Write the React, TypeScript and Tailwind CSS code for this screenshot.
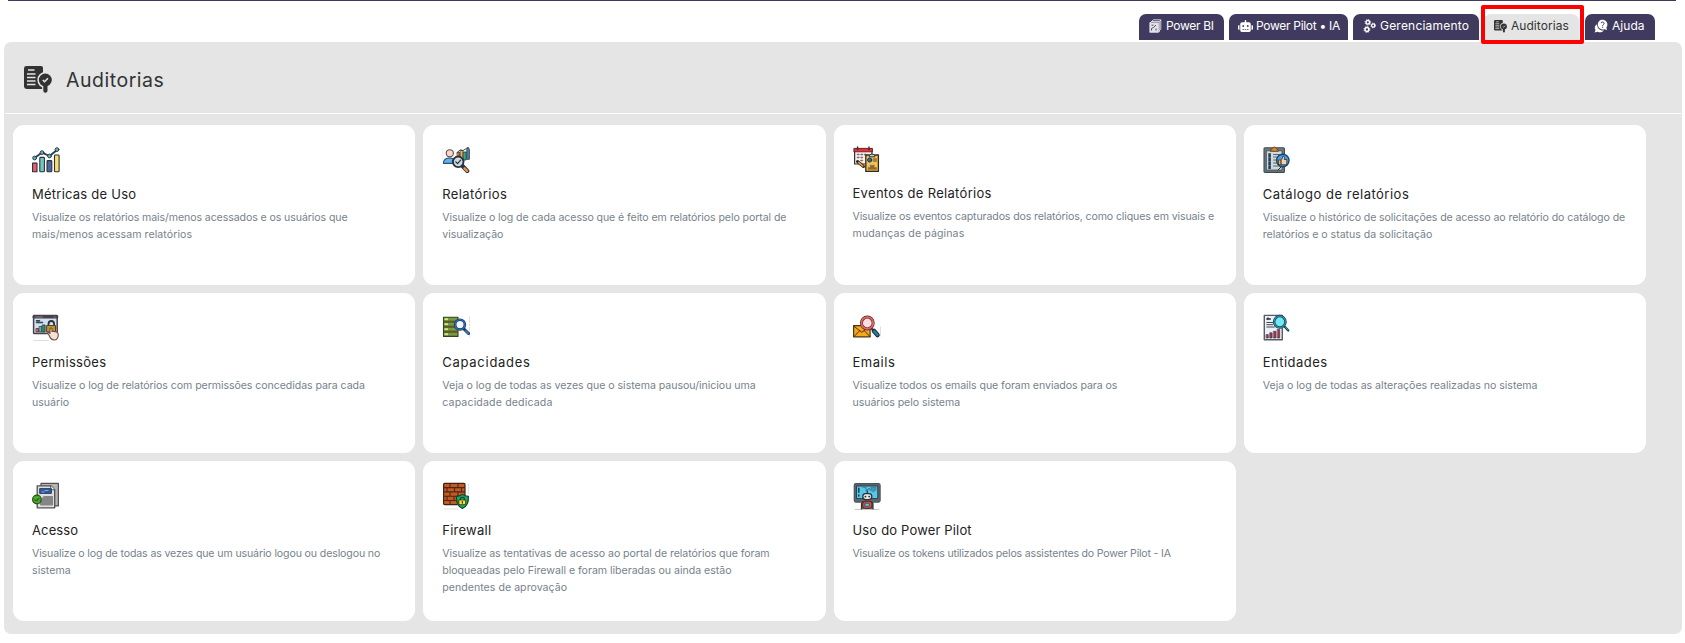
import React from "react";
import { FaRobot } from "react-icons/fa";

type Line = [text: string, tracking: string];
type CardData = {
  icon: React.ReactNode;
  title: string;
  titleTracking: string;
  lines: Line[];
  raised?: boolean;
};

const INK = "#2d3138";

function Svg({ children }: { children: React.ReactNode }) {
  return (
    <svg viewBox="0 0 28 28" className="block h-7 w-7" fill="none" stroke={INK} strokeLinejoin="round" strokeLinecap="round">
      {children}
    </svg>
  );
}

const MetricsIcon = (
  <Svg>
    <rect x="0.6" y="17.1" width="4.4" height="8.7" fill="#e8606f" strokeWidth="1.1" />
    <rect x="7.8" y="11.4" width="4.6" height="14.4" rx="0.8" fill="#6fc8c1" strokeWidth="1.1" />
    <rect x="15" y="14.6" width="4.8" height="11.2" rx="0.8" fill="#4c669f" strokeWidth="1.1" />
    <rect x="22.5" y="9" width="4.6" height="16.8" rx="0.8" fill="#fbdd6e" strokeWidth="1.1" />
    <path d="M2.5 12 10 6.6 17.5 10 25 4" stroke="#36395a" strokeWidth="1.9" />
    <g fill="#55bdb8" strokeWidth="0.9">
      <circle cx="2.6" cy="12" r="1.9" />
      <circle cx="10" cy="6.6" r="1.9" />
      <circle cx="17.5" cy="10" r="1.9" />
      <circle cx="25" cy="3.6" r="1.9" />
    </g>
  </Svg>
);

const ReportsIcon = (
  <Svg>
    <path d="M0.8 2.5V13" stroke="#d9d9d9" strokeWidth="0.6" />
    <rect x="15.5" y="6.5" width="2.4" height="7" fill="#e05a4e" strokeWidth="0.7" />
    <rect x="18.6" y="4.5" width="2.4" height="9" fill="#f0b93a" strokeWidth="0.7" />
    <rect x="21.6" y="6" width="2.6" height="8" fill="#27ae83" strokeWidth="0.8" />
    <path d="M24.8 13V3.4l1.6-2 1 2V13Z" fill="#4b86ba" strokeWidth="0.8" />
    <path d="M15 6.5 18.5 3.8 21 4.6 25.6 1.6" strokeWidth="0.9" />
    <circle cx="7.8" cy="7.3" r="3.6" fill="#f7d6cc" stroke="#6b4b46" strokeWidth="1.1" />
    <path d="M1.4 17.4C1.4 13.6 4 12 7.5 12c3 0 5 1 5.8 3v2.4Z" fill="#63b0ee" stroke="#2c5378" strokeWidth="1.1" />
    <path d="m20.5 20 4.8 5" stroke={INK} strokeWidth="4" />
    <path d="m22.5 22.3 2.6 2.6" stroke="#d79a55" strokeWidth="2.4" />
    <circle cx="16.2" cy="15.8" r="5.3" fill="#c9dce8" strokeWidth="1.9" />
    <path d="m13.8 15.8 1.8 1.9 3-3.6" strokeWidth="1.2" />
  </Svg>
);

const EventsIcon = (
  <Svg>
    <rect x="1.6" y="3" width="17.4" height="15" fill="#f6f1ee" strokeWidth="1.2" />
    <rect x="1.2" y="2.4" width="18.2" height="3.4" fill="#e33238" stroke="#5b1418" strokeWidth="0.8" />
    <path d="M4.6 1v2.6M16 1v2.6" strokeWidth="1.4" />
    <path d="M4.5 8.5h1.4M8 8.5h1.4M4.5 11.5h1.4M8 11.5h1.4M8 14.5h1.4M11.5 8.5h1" stroke="#7a6a68" strokeWidth="1.5" />
    <rect x="12.8" y="9" width="12.6" height="16.4" fill="#f2c35b" stroke="#33271a" strokeWidth="1.3" />
    <path d="M16.2 10.4c0-3.2 5.6-3.2 5.6 0Z" fill="#b8d6ee" strokeWidth="1" />
    <circle cx="16.7" cy="14" r="2.1" fill="#2d6ea3" strokeWidth="1" />
    <path d="M20.5 13h3M20.5 15h3" stroke="#8d6a34" strokeWidth="1.3" />
    <path d="M15.2 23.6v-2h2v-2.4h4v2.4h2.2v2Z" fill="#8d6a34" stroke="#8d6a34" strokeWidth="0.6" />
    <path d="m4.5 15.5 6 5" stroke="#3b2419" strokeWidth="3" />
    <path d="m5.8 16.6 4 3.4" stroke="#eda73d" strokeWidth="1.5" />
  </Svg>
);

const CatalogIcon = (
  <Svg>
    <rect x="1" y="1.8" width="20.4" height="24.6" rx="1" fill="#6d7b80" stroke="#404b50" strokeWidth="1.1" />
    <rect x="3.6" y="4.8" width="15.4" height="19.2" fill="#d3d9db" stroke="#404b50" strokeWidth="0.8" />
    <path d="M7.5 4.9c.2-1.9 1.4-2 2-2.5.8-1.8 3-1.8 3.8 0 .6.5 1.8.6 2 2.5Z" fill="#d7862f" stroke="#5e3a16" strokeWidth="0.9" />
    <path d="M6.6 8.6v1.2M6.6 12.6v1.2M6.6 16.6v1.2M6.6 20.6v1.2" stroke="#1f3f66" strokeWidth="2.6" strokeLinecap="square" />
    <path d="M10.5 8.500h6M10.5 11h4M10.5 14h3M10.5 17h3.5M10.5 20h6" stroke="#586468" strokeWidth="1" />
    <path d="m15 24 4-4" strokeWidth="1" />
    <circle cx="19.8" cy="14.5" r="6.2" fill="#4b9de4" stroke="#174877" strokeWidth="1.4" />
    <path d="M18 18.5v-4.3c1.4-1 1.4-2.6 1.8-4 1.7-.2 1.9 1.5 1.5 3.3h2.500v5Z" fill="#f7cfae" stroke="#33271a" strokeWidth="0.8" />
    <rect x="15.8" y="14" width="2" height="4.6" fill="#ebbc3e" stroke="#33271a" strokeWidth="0.7" />
  </Svg>
);

const PermissionsIcon = (
  <Svg>
    <path d="M1.5 26.5h15" stroke="#d6d6d6" strokeWidth="0.8" />
    <rect x="1.6" y="1.6" width="23.6" height="18" rx="0.5" fill="#cfe1f3" stroke="#4a4148" strokeWidth="1.5" />
    <path d="M1.8 3H25" stroke="#4a4148" strokeWidth="2.8" />
    <path d="M3.5 3h7M22 3h1" stroke="#9b8d94" strokeWidth="0.8" />
    <path d="M4.5 8.5h6M4.5 6.8h3" stroke="#39404d" strokeWidth="1.5" />
    <rect x="4.3" y="14.5" width="2.3" height="3.5" fill="#e0574f" strokeWidth="0.7" />
    <rect x="7.5" y="12.5" width="2.3" height="5.5" fill="#68b38b" strokeWidth="0.7" />
    <rect x="10.5" y="11" width="2.6" height="7" fill="#2a8b85" strokeWidth="0.8" />
    <path d="M16.5 11.5V10c0-4 5.6-4 5.6 0v1.5" strokeWidth="1.8" />
    <rect x="15" y="11.5" width="8.5" height="6.5" fill="#c2922c" stroke="#57401a" strokeWidth="1" />
    <path d="M17.2 21.5 15.6 19c.5-1 1.7-.5 2.4.5v-4.7c.3-1 1.7-1 2 0v2.7c2-.5 6 .5 6.2 2.200.3 3-.7 6.300-3.700 6.300-2.500 0-4.300-1.500-5.300-4.500Z" fill="#fae0d2" stroke="#66504a" strokeWidth="1.1" />
  </Svg>
);

const CapacityIcon = (
  <Svg>
    {[2.5, 7.5, 12.5, 17.5].map((y) => (
      <g key={y}>
        <rect x="1.5" y={y + 0.7} width="14.5" height="4.2" fill="#759b43" stroke="#33431d" strokeWidth="1.1" />
        <path d={`M2.5 ${y + 2.7}h3.5`} stroke="#c9ed7f" strokeWidth="1.9" strokeLinecap="butt" />
      </g>
    ))}
    <path d="M2.5 7.9h13M2.5 12.9h13M2.5 17.9h13" stroke="#a66b38" strokeWidth="0.8" />
    <path d="M27.5 3v20" stroke="#bdbdbd" strokeWidth="0.5" strokeDasharray="2 1.5" />
    <path d="m21.5 14.5 5 5" stroke="#1b3557" strokeWidth="3" />
    <path d="m23.500 16.600 2.700 2.700" stroke="#3777c2" strokeWidth="1.7" />
    <circle cx="18" cy="10.600" r="4.900" fill="#eef6fc" stroke="#1b3557" strokeWidth="2.6" />
    <circle cx="18" cy="10.600" r="4.900" stroke="#2f71ba" strokeWidth="1.2" />
  </Svg>
);

const EmailsIcon = (
  <Svg>
    <rect x="0.6" y="11.6" width="16.5" height="11.2" fill="#f6a81c" stroke="#4d3510" strokeWidth="1.2" />
    <path d="m1 12.300 7.800 6 8-6M1 22.600l5.800-6M17 22.600l-5.800-6" stroke="#4d3510" strokeWidth="1" />
    <path d="M27.500 13v9" stroke="#bfbfbf" strokeWidth="0.5" />
    <path d="m18.500 14.500 1.800 2" strokeWidth="1.9" />
    <path d="m21 17 3.500 4" stroke="#1c3540" strokeWidth="4.6" />
    <path d="m21.400 17.500 2.900 3.200" stroke="#2f7898" strokeWidth="2.6" />
    <circle cx="14.300" cy="9" r="5.900" fill="#f8dfe1" stroke="#5d2527" strokeWidth="3" />
    <circle cx="14.300" cy="9" r="5.900" stroke="#de6366" strokeWidth="1.9" />
  </Svg>
);

const EntitiesIcon = (
  <Svg>
    <rect x="1.3" y="1.4" width="18" height="24.3" fill="#edf0f6" stroke="#5a5c64" strokeWidth="1.4" />
    <path d="M3.8 5h3.600M5 3.8v1.800" strokeWidth="1.3" />
    <path d="M3.8 8.500h6M3.8 10.700h6M3.8 13h7.500" stroke="#44464e" strokeWidth="1" />
    <g fill="#a82f4e" strokeWidth="0.6">
      <rect x="3.4" y="20.6" width="1.9" height="3.4" />
      <rect x="7" y="18.8" width="2.1" height="5.2" />
      <rect x="10.7" y="17.3" width="2.2" height="6.7" />
      <rect x="14.5" y="15.5" width="2.2" height="8.5" />
    </g>
    <path d="m20.500 11.500 4.800 5" stroke="#173d4a" strokeWidth="2.3" />
    <path d="m22.300 13.300 2.700 2.800" stroke="#35a6bd" strokeWidth="0.9" />
    <circle cx="16.8" cy="7.8" r="5.7" fill="#76e8f5" stroke="#173d4a" strokeWidth="2.5" />
    <circle cx="16.8" cy="7.8" r="5.7" stroke="#2b93aa" strokeWidth="1.2" />
  </Svg>
);

const AccessIcon = (
  <Svg>
    <path d="M9 1.400h17.400v22.400H9Z" fill="#b4b4b4" stroke="#515151" strokeWidth="1.2" />
    <path d="M5.200 3.800h13.500l4 4v18H5.200Z" fill="#dedede" stroke="#515151" strokeWidth="1.3" />
    <path d="M18.700 3.800v4h4" fill="#fff" stroke="#515151" strokeWidth="1" />
    <rect x="8" y="6.6" width="11.4" height="4.8" fill="#315b9c" stroke="#1e355b" strokeWidth="0.9" />
    <path d="M10 10h2M13 8.500h3" stroke="#89aad8" strokeWidth="1" />
    <path d="M12 14.500h8.500V23h-12v-4Z" fill="#858585" stroke="#858585" strokeWidth="1" />
    <circle cx="4.9" cy="17.5" r="4.3" fill="#4da62d" stroke="#235516" strokeWidth="1.2" />
    <path d="m3 17.600 1.500 1.500 2.400-2.700" stroke="#173c0f" strokeWidth="1" />
  </Svg>
);

const FirewallIcon = (
  <Svg>
    <path d="M2 27h14M26.500 2v10" stroke="#cfcfcf" strokeWidth="0.6" />
    <rect x="1.6" y="1.4" width="21.4" height="21.2" rx="1" fill="#c25a24" stroke="#3f2215" strokeWidth="1.2" />
    <path d="M2 5.600h20.500M2 9.900h20.500M2 14.200h20.500M2 18.500h20.500M8 1.600v4M16 1.600v4M5 5.600v4.300M12.500 5.600v4.300M19.500 5.600v4.300M8 9.900v4.300M16 9.900v4.300M5 14.200v4.300M12 14.200v4.300M8 18.500v4" stroke="#4d2716" strokeWidth="1.1" />
    <path d="M20.400 12.400c1.900 1.600 3.800 1.900 6 2 .3 5.300-.5 9.600-6 12.100-5.500-2.500-6.300-6.800-6-12.100 2.200-.1 4.100-.4 6-2Z" fill="#19a76a" stroke="#0e4930" strokeWidth="1.2" />
    <path d="M18.400 18.200V17c0-2.300 4-2.300 4 0v1.200" stroke="#123523" strokeWidth="1.1" />
    <rect x="17.2" y="18" width="6.4" height="4.6" fill="#f7df28" stroke="#3f3a10" strokeWidth="0.8" />
    <path d="M20.400 19.600v1.500" strokeWidth="1.2" />
  </Svg>
);

const PilotIcon = (
  <Svg>
    <path d="M2 27.400h24" stroke="#a9a9a9" strokeWidth="0.7" />
    <rect x="1.3" y="1.7" width="25.8" height="18.4" rx="1.5" fill="#5d686e" stroke="#4a555a" strokeWidth="1.2" />
    <rect x="3.8" y="4" width="21" height="12.6" fill="#56c9ea" stroke="#24363f" strokeWidth="0.9" />
    <path d="M5.800 6.200v4M5.800 13v1" stroke="#223a45" strokeWidth="1.5" />
    <path d="M9 5h4v4l3-3 2 2V5h5v3l-3 2" fill="#4696ae" stroke="#387c92" strokeWidth="0.7" />
    <path d="M8.500 27v-5.500l2-2H18l2 2V27" fill="#58636a" strokeWidth="1.2" />
    <path d="M14.300 9v2.500" strokeWidth="1.3" />
    <rect x="9.8" y="11.6" width="9" height="6" rx="2.8" fill="#ece7e8" strokeWidth="1.3" />
    <path d="M12.400 14.600h.1M16.200 14.600h.1" strokeWidth="1.9" />
    <rect x="9.7" y="19.3" width="9.2" height="7" rx="2.5" fill="#d65243" stroke="#61251f" strokeWidth="1" />
    <rect x="12.3" y="21.3" width="4" height="3" fill="#58c7e8" stroke="#2a5364" strokeWidth="0.8" />
  </Svg>
);

function AuditIcon({ className, gap }: { className: string; gap: string }) {
  return (
    <svg viewBox="0 0 28 28" className={className}>
      <path d="M2.500 0H17a2 2 0 0 1 2 2v22.600H2.500A2.500 2.500 0 0 1 0 22.100V2.500A2.500 2.500 0 0 1 2.500 0Z" fill="#333" transform="scale(1 .93)" />
      <path d="M4 4h6.500M3 8h8.500M3 11.500h8.500M3 15h8.500M3 18.500h8.500" stroke={gap} strokeWidth="1.5" />
      <circle cx="21.3" cy="14" r="8" fill={gap} />
      <path d="M21.400 18v6.500" stroke={gap} strokeWidth="6.5" />
      <circle cx="21.3" cy="14" r="6.5" fill="#333" />
      <path d="M21.400 19v5.700" stroke="#333" strokeWidth="4.2" strokeLinecap="round" />
      <path d="m18.800 14 1.700 1.700 3.500-3.500" stroke={gap} strokeWidth="1.6" fill="none" />
    </svg>
  );
}

const PowerBIIcon = (
  <svg viewBox="0 0 13 14" className="h-3.5 w-[13px]" fill="none" stroke="#fff">
    <path d="M4.500.8h7.300v9.400l-1.500 1.600M3 2.500h7.300v10.600" strokeWidth="0.9" opacity="0.85" />
    <path d="M1 3.800 4.500.8M10.300 2.500l1.500-1.600" strokeWidth="0.8" />
    <rect x="0.8" y="3.8" width="8.7" height="9.600" fill="#fff" strokeWidth="0.6" opacity="0.85" />
    <path d="M2.500 11.500V9.500l2-1 2.500-2.500M7 11.500V9.500M2.500 6.200h2" stroke="#403b5e" strokeWidth="0.9" />
  </svg>
);

const GearsIcon = (
  <svg viewBox="0 0 13 14" className="h-3.5 w-[13px]" fill="none" stroke="#fff">
    <circle cx="4.8" cy="3.3" r="1.8" strokeWidth="1.4" />
    <circle cx="4.8" cy="3.3" r="2.8" strokeWidth="0.8" strokeDasharray="1.2 1" />
    <circle cx="10.2" cy="6.5" r="1.6" strokeWidth="1.3" />
    <circle cx="10.2" cy="6.5" r="2.4" strokeWidth="0.8" strokeDasharray="1 0.8" />
    <circle cx="3.9" cy="10.5" r="1.9" strokeWidth="1.5" />
    <circle cx="3.9" cy="10.5" r="2.9" strokeWidth="0.9" strokeDasharray="1.3 1" />
  </svg>
);

const HelpIcon = (
  <svg viewBox="0 0 14 14" className="h-3.5 w-3.5">
    <path d="M3 5.200C.6 6.500.2 9 1.500 11L.6 13.500l3-.7c2.300 1 5 .5 6.200-1.300-3.800.3-6.800-2.300-6.800-6.300Z" fill="#fff" />
    <path d="M8.400.8c3 0 5 2.200 5 4.800 0 1.200-.4 2.200-1 3l.6 2.300-2.400-.7c-3.400 1.300-6.800-1.200-6.800-4.600 0-2.700 2-4.800 4.600-4.800Z" fill="#fff" />
    <path d="M7 4.200c.2-1.700 3.100-1.500 3.100.2 0 1.200-1.500 1.200-1.500 2.400" stroke="#403b5e" strokeWidth="1" fill="none" />
    <circle cx="8.6" cy="8.2" r="0.6" fill="#403b5e" />
  </svg>
);

const CARDS: CardData[] = [
  {
    icon: MetricsIcon, title: "Métricas de Uso", titleTracking: "tracking-[0.24px]",
    lines: [
      ["Visualize os relatórios mais/menos acessados e os usuários que", "tracking-[-0.1px]"],
      ["mais/menos acessam relatórios", "tracking-[0.062px]"],
    ],
  },
  {
    icon: ReportsIcon, title: "Relatórios", titleTracking: "tracking-[0.4px]",
    lines: [
      ["Visualize o log de cada acesso que é feito em relatórios pelo portal de", "tracking-[-0.095px]"],
      ["visualização", "tracking-[-0.051px]"],
    ],
  },
  {
    icon: EventsIcon, title: "Eventos de Relatórios", titleTracking: "tracking-[0.31px]", raised: true,
    lines: [
      ["Visualize os eventos capturados dos relatórios, como cliques em visuais e", "tracking-[-0.125px]"],
      ["mudanças de páginas", "tracking-[0.1px]"],
    ],
  },
  {
    icon: CatalogIcon, title: "Catálogo de relatórios", titleTracking: "tracking-[0.5px]",
    lines: [
      ["Visualize o histórico de solicitações de acesso ao relatório do catálogo de", "tracking-[-0.1px]"],
      ["relatórios e o status da solicitação", "tracking-[-0.034px]"],
    ],
  },
  {
    icon: PermissionsIcon, title: "Permissões", titleTracking: "tracking-[0.3px]",
    lines: [
      ["Visualize o log de relatórios com permissões concedidas para cada", "tracking-[-0.071px]"],
      ["usuário", "tracking-normal"],
    ],
  },
  {
    icon: CapacityIcon, title: "Capacidades", titleTracking: "tracking-[0.73px]",
    lines: [
      ["Veja o log de todas as vezes que o sistema pausou/iniciou uma", "tracking-[-0.034px]"],
      ["capacidade dedicada", "tracking-[0.14px]"],
    ],
  },
  {
    icon: EmailsIcon, title: "Emails", titleTracking: "tracking-[0.52px]",
    lines: [
      ["Visualize todos os emails que foram enviados para os", "tracking-[-0.07px]"],
      ["usuários pelo sistema", "tracking-[-0.06px]"],
    ],
  },
  {
    icon: EntitiesIcon, title: "Entidades", titleTracking: "tracking-[0.49px]",
    lines: [["Veja o log de todas as alterações realizadas no sistema", "tracking-[-0.03px]"]],
  },
  {
    icon: AccessIcon, title: "Acesso", titleTracking: "tracking-[0.13px]",
    lines: [
      ["Visualize o log de todas as vezes que um usuário logou ou deslogou no", "tracking-[-0.135px]"],
      ["sistema", "tracking-[0.041px]"],
    ],
  },
  {
    icon: FirewallIcon, title: "Firewall", titleTracking: "tracking-[0.25px]",
    lines: [
      ["Visualize as tentativas de acesso ao portal de relatórios que foram", "tracking-[-0.072px]"],
      ["bloqueadas pelo Firewall e foram liberadas ou ainda estão", "tracking-[-0.025px]"],
      ["pendentes de aprovação", "tracking-[0.023px]"],
    ],
  },
  {
    icon: PilotIcon, title: "Uso do Power Pilot", titleTracking: "tracking-[0.16px]",
    lines: [["Visualize os tokens utilizados pelos assistentes do Power Pilot - IA", "tracking-[-0.2px]"]],
  },
];

function Card({ icon, title, titleTracking, lines, raised }: CardData) {
  return (
    <article className="h-40 rounded-[11px] bg-white pl-[19px] pt-[21px]">
      {icon}
      <h2 className={`${raised ? "mt-[9px]" : "mt-2.5"} text-[13px] font-normal leading-5 text-[#222] ${titleTracking}`}>
        {title}
      </h2>
      <p className="mt-[5px] text-[10.6px] leading-[17px] text-[#77828c]">
        {lines.map(([text, tracking]) => (
          <span key={text} className={`block whitespace-nowrap ${tracking}`}>{text}</span>
        ))}
      </p>
    </article>
  );
}

function Tab({ icon, label, className }: { icon: React.ReactNode; label: string; className: string }) {
  return (
    <a className={`flex h-[26px] shrink-0 items-center whitespace-nowrap rounded-t-[7px] pb-0.5 pl-2 text-xs ${className}`}>
      <span className="mr-[3px] flex w-4 shrink-0 justify-center">{icon}</span>
      {label}
    </a>
  );
}

export default function App() {
  return (
    <div className="h-[643px] w-[1685px] overflow-hidden bg-white font-['Inter',sans-serif]">
      <div className="ml-2 h-px w-[1668px] bg-[#403b5e]" />
      <nav className="flex h-[41px] justify-end gap-[5px] pr-[30px] pt-[13px]">
        <Tab icon={PowerBIIcon} label="Power BI" className="w-[85px] bg-[#403b5e] tracking-[-0.3px] text-white" />
        <Tab icon={<FaRobot className="h-3 w-[15px] text-white" />} label="Power Pilot • IA" className="w-[119px] bg-[#403b5e] tracking-[-0.3px] text-white" />
        <Tab icon={GearsIcon} label="Gerenciamento" className="w-[126px] bg-[#403b5e] tracking-[0.21px] text-white" />
        <div className="relative w-[95px]">
          <Tab
            icon={<AuditIcon className="mt-px h-[13px] w-[13px]" gap="#e5e5e5" />}
            label="Auditorias"
            className="bg-[#e5e5e5] tracking-[0.048px] text-[#333]"
          />
          <div className="absolute -left-[3px] -top-[9px] h-[39px] w-[103px] rounded-[2px] border-4 border-[#fe0000]" />
        </div>
        <Tab icon={HelpIcon} label="Ajuda" className="ml-px w-[70px] bg-[#403b5e] tracking-[0.05px] text-white" />
      </nav>

      <main className="ml-1 h-[592px] w-[1678px] rounded-[7px] bg-[#e5e5e5] px-px">
        <header className="flex h-[72px] items-center border-b border-white pl-[19px] pt-1">
          <AuditIcon className="mt-px h-7 w-7" gap="#e5e5e5" />
          <h1 className="ml-3.5 text-[19.5px] font-normal leading-6 tracking-[0.52px] text-[#333]">Auditorias</h1>
        </header>
        <section className="grid w-[1641px] grid-cols-4 gap-2 pl-2 pt-[11px]">
          {CARDS.map((card) => (
            <Card key={card.title} {...card} />
          ))}
        </section>
      </main>
    </div>
  );
}
